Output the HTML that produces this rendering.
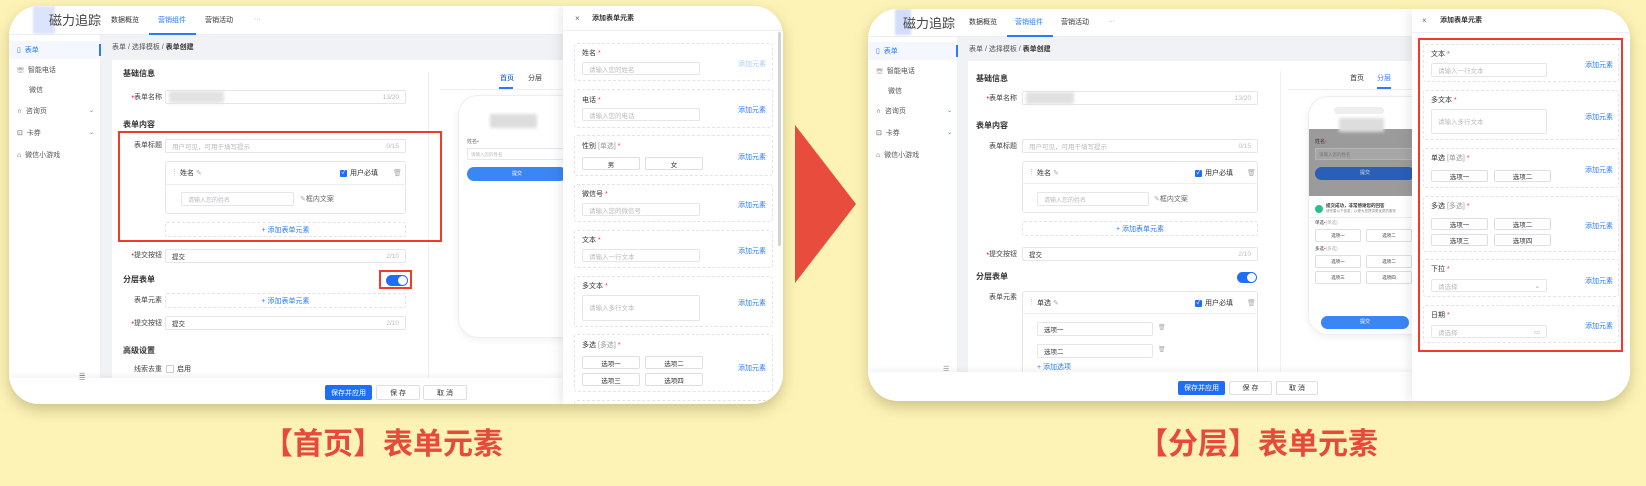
<!DOCTYPE html>
<html><head><meta charset="utf-8">
<style>
*{box-sizing:border-box;margin:0;padding:0}
body{width:1646px;height:486px;background:#fdf3b6;position:relative;overflow:hidden;font-family:"Liberation Sans","Noto Sans CJK SC",sans-serif;color:#333;font-size:7px}
.a{position:absolute}
.card{position:absolute;background:#fff;border-radius:30px;overflow:hidden;box-shadow:0 6px 14px rgba(120,110,60,.35)}
.nav{left:0;top:0;right:0;height:29px;background:#fff;border-bottom:1px solid #eceef2}
.side{background:#fff;border-right:1px solid #eef0f3}
.main{background:#f1f2f5}
.panel{background:#fff}
.t{position:absolute;white-space:nowrap;line-height:1}
.b{font-weight:bold}
.lbl{position:absolute;white-space:nowrap;line-height:1;text-align:right;color:#444}
.inp{position:absolute;border:1px solid #e4e6ea;border-radius:2px;background:#fff;color:#bbb;padding-left:6px;display:flex;align-items:center;white-space:nowrap;font-size:6.5px}
.cnt{position:absolute;right:6px;color:#bbb}
.dash{position:absolute;border:1px dashed #e2e4e8;border-radius:2px;color:#2a7cf6;display:flex;align-items:center;justify-content:center;font-size:7px}
.blue{color:#2a7cf6}
.req{color:#f33}
.fc{position:absolute;border:1px dashed #e2e4e8;border-radius:3px;background:#fff}
.opt{position:absolute;border:1px solid #dcdfe4;border-radius:2px;background:#fff;display:flex;align-items:center;justify-content:center;font-size:6.5px;color:#333}
.link{position:absolute;color:#2a7cf6;font-size:7px;white-space:nowrap}
.btn{position:absolute;border:1px solid #dcdfe4;border-radius:2px;background:#fff;display:flex;align-items:center;justify-content:center;font-size:7px;color:#333}
.btnp{background:#1e6ff5;border-color:#1e6ff5;color:#fff}
.drawer{position:absolute;top:0;bottom:0;background:#fff;box-shadow:-4px 0 10px rgba(0,0,0,.08)}
.chk{position:absolute;width:7px;height:7px;background:#1e6ff5;border-radius:1px;color:#fff;font-size:6px;line-height:7px;text-align:center}
.cap{position:absolute;font-size:30px;font-weight:bold;color:#e8493a;white-space:nowrap;line-height:1;font-family:"Liberation Sans","Noto Sans CJK SC",sans-serif}
</style></head><body>

<svg class="a" style="left:0;top:0" width="1646" height="486"><polygon points="795,125 856,204 795,283" fill="#e84c3d"/></svg>

<!-- CARD 1 -->
<div class="card" style="left:9px;top:6px;width:774px;height:398px">
  <div class="a nav"></div>
  <div class="a" style="left:24px;top:0;width:22px;height:28px;background:#dbe4fb;filter:blur(1px)"></div>
  <div class="t" style="left:40px;top:8px;font-size:13px;color:#444">磁力追踪</div>
  <div class="t" style="left:102px;top:11px">数据概览</div>
  <div class="t blue" style="left:149px;top:11px">营销组件</div>
  <div class="a" style="left:140px;top:27px;width:47px;height:2px;background:#2a7cf6"></div>
  <div class="t" style="left:196px;top:11px">营销活动</div>
  <div class="t" style="left:245px;top:10px;color:#999">···</div>

  <div class="a side" style="left:0;top:29px;width:92px;height:343px"></div>
  <div class="a" style="left:0;top:35px;width:90px;height:18px;background:#f4f7fd"></div>
  <div class="a" style="left:90px;top:38px;width:2px;height:12px;background:#2a7cf6"></div>
  <div class="t blue" style="left:8px;top:41px">▯ &nbsp;表单</div>
  <div class="t" style="left:8px;top:61px;color:#555">☏ &nbsp;智能电话</div>
  <div class="t" style="left:20px;top:81px;color:#555">微信</div>
  <div class="t" style="left:8px;top:102px;color:#555">∩ &nbsp;咨询页</div>
  <div class="t" style="left:80px;top:102px;color:#777;font-size:6px">⌄</div>
  <div class="t" style="left:8px;top:124px;color:#555">⊡ &nbsp;卡券</div>
  <div class="t" style="left:80px;top:124px;color:#777;font-size:6px">⌄</div>
  <div class="t" style="left:8px;top:146px;color:#555">⌂ &nbsp;微信小游戏</div>
  <div class="t" style="left:70px;top:367px;color:#888">☰</div>

  <div class="a main" style="left:92px;top:29px;width:462px;height:343px"></div>
  <div class="t" style="left:103px;top:38px;color:#555">表单 / 选择模板 / <b style="color:#333">表单创建</b></div>
  <div class="a panel" style="left:103px;top:54px;width:451px;height:318px"></div>
  <div class="a" style="left:419px;top:66px;width:1px;height:306px;background:#eef0f3"></div>

  <div class="t b" style="left:114px;top:64px;font-size:8px">基础信息</div>
  <div class="lbl" style="left:113px;top:88px;width:40px"><span class="req">•</span>表单名称</div>
  <div class="inp" style="left:156px;top:84px;width:241px;height:14px"><span class="cnt">13/20</span></div>
  <div class="a" style="left:160px;top:85px;width:55px;height:12px;background:#e2e2e2;filter:blur(1.5px)"></div>
  <div class="t b" style="left:114px;top:115px;font-size:8px">表单内容</div>
  <div class="lbl" style="left:113px;top:136px;width:40px">表单标题</div>
  <div class="inp" style="left:156px;top:133px;width:241px;height:14px">用户可见，可用于填写提示<span class="cnt">0/15</span></div>
  <div class="a" style="left:156px;top:155px;width:241px;height:53px;border:1px solid #e4e6ea;border-radius:3px"></div>
  <div class="a" style="left:156px;top:178px;width:241px;height:1px;background:#eceef2"></div>
  <div class="t" style="left:162px;top:163px;color:#bbb">⋮</div>
  <div class="t" style="left:171px;top:164px">姓名 <span style="color:#aaa">✎</span></div>
  <div class="chk" style="left:331px;top:164px">✓</div>
  <div class="t" style="left:341px;top:164px">用户必填</div>
  <div class="t" style="left:384px;top:164px;color:#aaa">🗑</div>
  <div class="inp" style="left:172px;top:186px;width:113px;height:14px;font-size:6px">请输入您的姓名</div>
  <div class="t" style="left:291px;top:190px;color:#666"><span style="color:#aaa">✎</span>框内文案</div>
  <div class="dash" style="left:156px;top:216px;width:241px;height:15px">+ 添加表单元素</div>
  <div class="a" style="left:109px;top:125px;width:324px;height:111px;border:2px solid #f03a2a"></div>

  <div class="lbl" style="left:113px;top:246px;width:40px"><span class="req">•</span>提交按钮</div>
  <div class="inp" style="left:156px;top:243px;width:241px;height:14px;color:#333">提交<span class="cnt">2/10</span></div>
  <div class="t b" style="left:114px;top:270px;font-size:8px">分层表单</div>
  <div class="a" style="left:377px;top:269px;width:22px;height:11px;border-radius:6px;background:#1e6ff5"></div>
  <div class="a" style="left:389px;top:270px;width:9px;height:9px;border-radius:50%;background:#fff"></div>
  <div class="a" style="left:370px;top:264px;width:33px;height:19px;border:2px solid #f03a2a"></div>
  <div class="lbl" style="left:113px;top:291px;width:40px">表单元素</div>
  <div class="dash" style="left:156px;top:287px;width:241px;height:15px">+ 添加表单元素</div>
  <div class="lbl" style="left:113px;top:314px;width:40px"><span class="req">•</span>提交按钮</div>
  <div class="inp" style="left:156px;top:310px;width:241px;height:14px;color:#333">提交<span class="cnt">2/10</span></div>
  <div class="t b" style="left:114px;top:341px;font-size:8px">高级设置</div>
  <div class="lbl" style="left:113px;top:360px;width:40px">线索去重</div>
  <div class="a" style="left:157px;top:359px;width:8px;height:8px;border:1px solid #ccc;border-radius:1px"></div>
  <div class="t" style="left:168px;top:360px">启用</div>

  <div class="t" style="left:491px;top:69px">首页</div>
  <div class="t" style="left:519px;top:69px">分层</div>
  <div class="a" style="left:431px;top:83px;width:123px;height:1px;background:#eceef2"></div>
  <div class="a" style="left:490px;top:81px;width:14px;height:2px;background:#2a7cf6"></div>
  <div class="t blue" style="left:491px;top:69px">首页</div>
  <div class="a" style="left:449px;top:89px;width:130px;height:243px;border:1px solid #eceef2;border-radius:20px;box-shadow:0 2px 8px rgba(0,0,0,.06);background:#fff"></div>
  <div class="a" style="left:481px;top:108px;width:47px;height:14px;background:#ddd;filter:blur(1.5px)"></div>
  <div class="t" style="left:458px;top:134px;font-size:5px;color:#666">姓名<span class="req">•</span></div>
  <div class="a" style="left:458px;top:142px;width:100px;height:12px;border:1px solid #e4e6ea;border-radius:2px;font-size:4.5px;color:#bbb;padding:3px 3px">请输入您的姓名</div>
  <div class="a" style="left:458px;top:161px;width:100px;height:14px;border-radius:7px;background:#3a86f4;color:#fff;font-size:5px;text-align:center;line-height:14px">提交</div>

  <div class="a" style="left:0;top:372px;width:554px;height:26px;background:#fff;box-shadow:0 -2px 6px rgba(0,0,0,.06)"></div>
  <div class="t" style="left:70px;top:369px;color:#888">☰</div>
  <div class="btn btnp" style="left:316px;top:379px;width:47px;height:15px">保存并应用</div>
  <div class="btn" style="left:367px;top:379px;width:44px;height:15px">保 存</div>
  <div class="btn" style="left:414px;top:379px;width:44px;height:15px">取 消</div>

  <div class="drawer" style="left:554px;width:220px">
    <div class="t" style="left:12px;top:9px;color:#666;font-size:8px">×</div>
    <div class="t b" style="left:29px;top:9px">添加表单元素</div>
    <div class="a" style="left:0;top:24px;width:220px;height:1px;background:#eceef2"></div>
    <div class="a" style="left:215px;top:26px;width:3px;height:214px;background:#cfd2d6;border-radius:2px"></div>
    <div class="fc" style="left:11px;top:37px;width:199px;height:38px"></div>
    <div class="t b" style="left:19px;top:44px;font-weight:normal">姓名 <span class="req">*</span></div>
    <div class="inp" style="left:19px;top:56px;width:118px;height:13px">请输入您的姓名</div>
    <div class="link" style="left:175px;top:53px;color:#a9ccfb">添加元素</div>

    <div class="fc" style="left:11px;top:83px;width:199px;height:39px"></div>
    <div class="t" style="left:19px;top:91px">电话 <span class="req">*</span></div>
    <div class="inp" style="left:19px;top:102px;width:118px;height:13px">请输入您的电话</div>
    <div class="link" style="left:175px;top:99px">添加元素</div>

    <div class="fc" style="left:11px;top:129px;width:199px;height:41px"></div>
    <div class="t" style="left:19px;top:137px">性别 <span style="color:#999">[单选]</span> <span class="req">*</span></div>
    <div class="opt" style="left:19px;top:151px;width:58px;height:13px">男</div>
    <div class="opt" style="left:82px;top:151px;width:58px;height:13px">女</div>
    <div class="link" style="left:175px;top:146px">添加元素</div>

    <div class="fc" style="left:11px;top:178px;width:199px;height:38px"></div>
    <div class="t" style="left:19px;top:185px">微信号 <span class="req">*</span></div>
    <div class="inp" style="left:19px;top:197px;width:118px;height:13px">请输入您的微信号</div>
    <div class="link" style="left:175px;top:194px">添加元素</div>

    <div class="fc" style="left:11px;top:224px;width:199px;height:38px"></div>
    <div class="t" style="left:19px;top:231px">文本 <span class="req">*</span></div>
    <div class="inp" style="left:19px;top:243px;width:118px;height:13px">请输入一行文本</div>
    <div class="link" style="left:175px;top:240px">添加元素</div>

    <div class="fc" style="left:11px;top:270px;width:199px;height:51px"></div>
    <div class="t" style="left:19px;top:277px">多文本 <span class="req">*</span></div>
    <div class="inp" style="left:19px;top:289px;width:118px;height:26px;align-items:flex-start;padding-top:6px">请输入多行文本</div>
    <div class="link" style="left:175px;top:292px">添加元素</div>

    <div class="fc" style="left:11px;top:328px;width:199px;height:58px"></div>
    <div class="t" style="left:19px;top:336px">多选 <span style="color:#999">[多选]</span> <span class="req">*</span></div>
    <div class="opt" style="left:19px;top:350px;width:58px;height:13px">选项一</div>
    <div class="opt" style="left:82px;top:350px;width:58px;height:13px">选项二</div>
    <div class="opt" style="left:19px;top:367px;width:58px;height:13px">选项三</div>
    <div class="opt" style="left:82px;top:367px;width:58px;height:13px">选项四</div>
    <div class="link" style="left:175px;top:357px">添加元素</div>
    <div class="fc" style="left:11px;top:394px;width:199px;height:20px"></div>
  </div>
</div>

<!-- CARD 2 -->
<div class="card" style="left:868px;top:9px;width:762px;height:392px">
  <div class="a nav" style="height:28px"></div>
  <div class="a" style="left:27px;top:0;width:16px;height:26px;background:#d3ddfa;filter:blur(1px)"></div>
  <div class="t" style="left:35px;top:8px;font-size:13px;color:#444">磁力追踪</div>
  <div class="t" style="left:101px;top:10px">数据概览</div>
  <div class="t blue" style="left:147px;top:10px">营销组件</div>
  <div class="a" style="left:139px;top:26px;width:46px;height:2px;background:#2a7cf6"></div>
  <div class="t" style="left:193px;top:10px">营销活动</div>
  <div class="t" style="left:240px;top:9px;color:#999">···</div>

  <div class="a side" style="left:0;top:28px;width:90px;height:335px"></div>
  <div class="a" style="left:0;top:33px;width:88px;height:18px;background:#f4f7fd"></div>
  <div class="a" style="left:88px;top:36px;width:2px;height:12px;background:#2a7cf6"></div>
  <div class="t blue" style="left:8px;top:39px">▯ &nbsp;表单</div>
  <div class="t" style="left:8px;top:59px;color:#555">☏ &nbsp;智能电话</div>
  <div class="t" style="left:20px;top:79px;color:#555">微信</div>
  <div class="t" style="left:8px;top:99px;color:#555">∩ &nbsp;咨询页</div>
  <div class="t" style="left:79px;top:99px;color:#777;font-size:6px">⌄</div>
  <div class="t" style="left:8px;top:121px;color:#555">⊡ &nbsp;卡券</div>
  <div class="t" style="left:79px;top:121px;color:#777;font-size:6px">⌄</div>
  <div class="t" style="left:8px;top:143px;color:#555">⌂ &nbsp;微信小游戏</div>

  <div class="a main" style="left:90px;top:28px;width:454px;height:335px"></div>
  <div class="t" style="left:101px;top:37px;color:#555">表单 / 选择模板 / <b style="color:#333">表单创建</b></div>
  <div class="a panel" style="left:100px;top:52px;width:444px;height:311px"></div>
  <div class="a" style="left:412px;top:62px;width:1px;height:301px;background:#eef0f3"></div>

  <div class="t b" style="left:108px;top:66px;font-size:8px">基础信息</div>
  <div class="lbl" style="left:109px;top:86px;width:40px"><span class="req">•</span>表单名称</div>
  <div class="inp" style="left:154px;top:82px;width:236px;height:14px"><span class="cnt">13/20</span></div>
  <div class="a" style="left:158px;top:83px;width:48px;height:12px;background:#e0e0e0;filter:blur(1.5px)"></div>
  <div class="t b" style="left:108px;top:113px;font-size:8px">表单内容</div>
  <div class="lbl" style="left:109px;top:134px;width:40px">表单标题</div>
  <div class="inp" style="left:154px;top:130px;width:236px;height:14px">用户可见，可用于填写提示<span class="cnt">0/15</span></div>
  <div class="a" style="left:154px;top:152px;width:236px;height:52px;border:1px solid #e4e6ea;border-radius:3px"></div>
  <div class="a" style="left:154px;top:174px;width:236px;height:1px;background:#eceef2"></div>
  <div class="t" style="left:160px;top:160px;color:#bbb">⋮</div>
  <div class="t" style="left:169px;top:161px">姓名 <span style="color:#aaa">✎</span></div>
  <div class="chk" style="left:327px;top:161px">✓</div>
  <div class="t" style="left:337px;top:161px">用户必填</div>
  <div class="t" style="left:379px;top:161px;color:#aaa">🗑</div>
  <div class="inp" style="left:169px;top:183px;width:112px;height:14px;font-size:6px">请输入您的姓名</div>
  <div class="t" style="left:286px;top:187px;color:#666"><span style="color:#aaa">✎</span>框内文案</div>
  <div class="dash" style="left:154px;top:212px;width:236px;height:15px">+ 添加表单元素</div>

  <div class="lbl" style="left:109px;top:242px;width:40px"><span class="req">•</span>提交按钮</div>
  <div class="inp" style="left:154px;top:238px;width:236px;height:14px;color:#333">提交<span class="cnt">2/10</span></div>
  <div class="t b" style="left:108px;top:264px;font-size:8px">分层表单</div>
  <div class="a" style="left:369px;top:263px;width:20px;height:11px;border-radius:6px;background:#1e6ff5"></div>
  <div class="a" style="left:379px;top:264px;width:9px;height:9px;border-radius:50%;background:#fff"></div>
  <div class="lbl" style="left:109px;top:285px;width:40px">表单元素</div>
  <div class="a" style="left:154px;top:282px;width:236px;height:90px;border:1px solid #e4e6ea;border-radius:3px;background:#fff"></div>
  <div class="a" style="left:154px;top:304px;width:236px;height:1px;background:#eceef2"></div>
  <div class="t" style="left:160px;top:290px;color:#bbb">⋮</div>
  <div class="t" style="left:169px;top:291px">单选 <span style="color:#aaa">✎</span></div>
  <div class="chk" style="left:327px;top:291px">✓</div>
  <div class="t" style="left:337px;top:291px">用户必填</div>
  <div class="t" style="left:379px;top:291px;color:#aaa">🗑</div>
  <div class="inp" style="left:169px;top:313px;width:116px;height:14px;color:#333">选项一</div>
  <div class="t" style="left:290px;top:316px;color:#aaa;font-size:6px">🗑</div>
  <div class="inp" style="left:169px;top:335px;width:116px;height:14px;color:#333">选项二</div>
  <div class="t" style="left:290px;top:338px;color:#aaa;font-size:6px">🗑</div>
  <div class="t blue" style="left:169px;top:355px">+ 添加选项</div>

  <div class="t" style="left:482px;top:66px">首页</div>
  <div class="t blue" style="left:509px;top:66px">分层</div>
  <div class="a" style="left:420px;top:80px;width:124px;height:1px;background:#eceef2"></div>
  <div class="a" style="left:509px;top:78px;width:14px;height:2px;background:#2a7cf6"></div>
  <div class="a" style="left:440px;top:87px;width:130px;height:239px;border:1px solid #eceef2;border-radius:20px;box-shadow:0 2px 8px rgba(0,0,0,.06);background:#fff;overflow:hidden">
    <div class="a" style="left:0;top:32px;width:130px;height:67px;background:#9b9b9b"></div>
    <div class="a" style="left:25px;top:10px;width:50px;height:7px;border-radius:4px;background:#eee"></div>
    <div class="a" style="left:30px;top:21px;width:45px;height:14px;background:#ddd;filter:blur(1.5px)"></div>
    <div class="t" style="left:6px;top:43px;font-size:5px;color:#333">姓名<span class="req">•</span></div>
    <div class="a" style="left:6px;top:51px;width:100px;height:12px;background:#a6a6a6;border:1px solid #b5b5b5;font-size:4.5px;color:#777;padding:3px">请输入您的姓名</div>
    <div class="a" style="left:6px;top:70px;width:100px;height:13px;border-radius:7px;background:#2a5fb8;color:#ddd;font-size:5px;text-align:center;line-height:13px">提交</div>
    <div class="a" style="left:0;top:99px;width:130px;height:140px;background:#fff"></div>
    <div class="a" style="left:6px;top:108px;width:8px;height:8px;border-radius:50%;background:#2bbf8a"></div>
    <div class="t b" style="left:17px;top:107px;font-size:4.5px">提交成功，非常感谢您的回答</div>
    <div class="t" style="left:17px;top:113px;font-size:3.5px;color:#888">请完善以下信息，以便为您提供更优质的服务</div>
    <div class="a" style="left:0;top:120px;width:130px;height:1px;background:#eee"></div>
    <div class="t" style="left:6px;top:124px;font-size:4.5px">单选<span class="req">•</span><span style="color:#aaa">(单选)</span></div>
    <div class="opt" style="left:6px;top:132px;width:46px;height:13px;font-size:4.5px">选项一</div>
    <div class="opt" style="left:57px;top:132px;width:46px;height:13px;font-size:4.5px">选项二</div>
    <div class="t" style="left:6px;top:150px;font-size:4.5px">多选<span class="req">•</span><span style="color:#aaa">(多选)</span></div>
    <div class="opt" style="left:6px;top:158px;width:46px;height:13px;font-size:4.5px">选项一</div>
    <div class="opt" style="left:57px;top:158px;width:46px;height:13px;font-size:4.5px">选项二</div>
    <div class="opt" style="left:6px;top:174px;width:46px;height:13px;font-size:4.5px">选项三</div>
    <div class="opt" style="left:57px;top:174px;width:46px;height:13px;font-size:4.5px">选项四</div>
    <div class="a" style="left:12px;top:219px;width:88px;height:13px;border-radius:7px;background:#3a86f4;color:#fff;font-size:5px;text-align:center;line-height:13px">提交</div>
  </div>

  <div class="a" style="left:0;top:363px;width:544px;height:29px;background:#fff;box-shadow:0 -2px 6px rgba(0,0,0,.06)"></div>
  <div class="t" style="left:75px;top:357px;color:#888">☰</div>
  <div class="btn btnp" style="left:310px;top:372px;width:47px;height:14px">保存并应用</div>
  <div class="btn" style="left:361px;top:372px;width:43px;height:14px">保 存</div>
  <div class="btn" style="left:408px;top:372px;width:42px;height:14px">取 消</div>

  <div class="drawer" style="left:544px;width:218px">
    <div class="t" style="left:10px;top:8px;color:#666;font-size:8px">×</div>
    <div class="t b" style="left:28px;top:8px">添加表单元素</div>
    <div class="a" style="left:0;top:23px;width:218px;height:1px;background:#eceef2"></div>
    <div class="a" style="left:6px;top:29px;width:205px;height:314px;border:2px solid #f03a2a"></div>

    <div class="fc" style="left:11px;top:35px;width:196px;height:38px"></div>
    <div class="t" style="left:19px;top:42px">文本 <span class="req">*</span></div>
    <div class="inp" style="left:19px;top:54px;width:116px;height:14px">请输入一行文本</div>
    <div class="link" style="left:173px;top:51px">添加元素</div>

    <div class="fc" style="left:11px;top:81px;width:196px;height:50px"></div>
    <div class="t" style="left:19px;top:88px">多文本 <span class="req">*</span></div>
    <div class="inp" style="left:19px;top:100px;width:116px;height:25px;align-items:flex-start;padding-top:6px">请输入多行文本</div>
    <div class="link" style="left:173px;top:103px">添加元素</div>

    <div class="fc" style="left:11px;top:139px;width:196px;height:40px"></div>
    <div class="t" style="left:19px;top:146px">单选 <span style="color:#999">[单选]</span> <span class="req">*</span></div>
    <div class="opt" style="left:19px;top:161px;width:57px;height:12px">选项一</div>
    <div class="opt" style="left:82px;top:161px;width:57px;height:12px">选项二</div>
    <div class="link" style="left:173px;top:156px">添加元素</div>

    <div class="fc" style="left:11px;top:187px;width:196px;height:56px"></div>
    <div class="t" style="left:19px;top:194px">多选 <span style="color:#999">[多选]</span> <span class="req">*</span></div>
    <div class="opt" style="left:19px;top:209px;width:57px;height:12px">选项一</div>
    <div class="opt" style="left:82px;top:209px;width:57px;height:12px">选项二</div>
    <div class="opt" style="left:19px;top:225px;width:57px;height:12px">选项三</div>
    <div class="opt" style="left:82px;top:225px;width:57px;height:12px">选项四</div>
    <div class="link" style="left:173px;top:212px">添加元素</div>

    <div class="fc" style="left:11px;top:250px;width:196px;height:38px"></div>
    <div class="t" style="left:19px;top:257px">下拉 <span class="req">*</span></div>
    <div class="inp" style="left:19px;top:270px;width:116px;height:13px">请选择<span class="cnt" style="color:#999">⌄</span></div>
    <div class="link" style="left:173px;top:267px">添加元素</div>

    <div class="fc" style="left:11px;top:296px;width:196px;height:38px"></div>
    <div class="t" style="left:19px;top:303px">日期 <span class="req">*</span></div>
    <div class="inp" style="left:19px;top:316px;width:116px;height:13px">请选择<span class="cnt" style="color:#aaa">▭</span></div>
    <div class="link" style="left:173px;top:312px">添加元素</div>
  </div>
</div>

<div class="cap" style="left:263px;top:430px">【首页】表单元素</div>
<div class="cap" style="left:1138px;top:430px">【分层】表单元素</div>
</body></html>
